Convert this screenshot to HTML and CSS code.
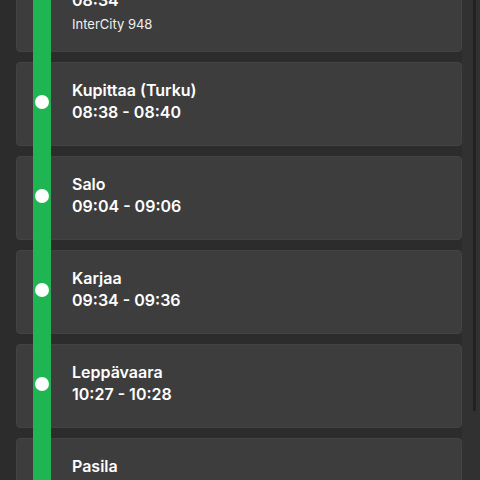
FILE: index.html
```html
<!DOCTYPE html>
<html lang="fi">
<head>
  <meta charset="UTF-8">
  <meta name="viewport" content="width=device-width, initial-scale=1.0">
  <title>Pysäkit</title>
  <link rel="stylesheet" href="styles.css">
</head>
<body>
  <div class="screen">
    <!-- Stop list -->
    <div class="stops">
      <div class="route-line"></div>
      <div class="stop-list">
        <div class="stop">
          <div class="stop-name">Turku</div>
          <div class="stop-time">08:34</div>
          <div class="stop-train">InterCity 948</div>
        </div>
        <div class="stop">
          <span class="stop-dot"></span>
          <div class="stop-name">Kupittaa (Turku)</div>
          <div class="stop-time">08:38 - 08:40</div>
        </div>
        <div class="stop">
          <span class="stop-dot"></span>
          <div class="stop-name">Salo</div>
          <div class="stop-time">09:04 - 09:06</div>
        </div>
        <div class="stop">
          <span class="stop-dot"></span>
          <div class="stop-name">Karjaa</div>
          <div class="stop-time">09:34 - 09:36</div>
        </div>
        <div class="stop">
          <span class="stop-dot"></span>
          <div class="stop-name">Leppävaara</div>
          <div class="stop-time">10:27 - 10:28</div>
        </div>
        <!-- Last stop: line ends, no dot -->
        <div class="stop">
          <div class="stop-name">Pasila</div>
          <div class="stop-time">10:33</div>
        </div>
      </div>
    </div>

    <!-- Scrollbar -->
    <div class="scroll-track">
      <div class="scroll-thumb"></div>
    </div>
  </div>
</body>
</html>
```

FILE: styles.css
```css
/* General Styles */
body {
  margin: 0;
  padding: 0;
  background-color: #2c2c2c;
  font-family: Inter, "Noto Sans", sans-serif;
  color: #ffffff;
}

.screen {
  display: flex;
  height: 480px;
  overflow: hidden;
}

/* Stop list */
.stops {
  position: relative;
  flex: 1;
  padding-left: 16px;
  overflow: hidden;
}

.route-line {
  position: absolute;
  top: 0;
  bottom: 0;
  left: 33px;
  width: 18px;
  background-color: #1eb552;
  z-index: 1;
}

.stop-list {
  display: flex;
  flex-direction: column;
  gap: 10px;
  margin-top: -50px;
}

.stop {
  position: relative;
  padding: 16px 16px 24px 55px;
  background-color: #3d3d3d;
  border: 1px solid #434343;
  border-radius: 4px;
  box-sizing: border-box;
  height: 84px;
}

.stop:first-child {
  height: auto;
  padding-bottom: 18px;
}

.stop-dot {
  position: absolute;
  top: 32px;
  left: 18px;
  width: 14px;
  height: 14px;
  border-radius: 50%;
  background-color: #ffffff;
  z-index: 2;
}

.stop-name,
.stop-time {
  font-size: 16px;
  font-weight: 600;
  line-height: 22px;
}

.stop-train {
  margin-top: 4px;
  font-size: 13px;
  line-height: 18px;
  color: #f0f0f0;
}

/* Scrollbar */
.scroll-track {
  width: 18px;
  background-color: #313131;
  display: flex;
  justify-content: flex-end;
  padding-right: 4px;
  box-sizing: border-box;
}

.scroll-thumb {
  width: 3px;
  height: 411px;
  background-color: #222222;
}
```
